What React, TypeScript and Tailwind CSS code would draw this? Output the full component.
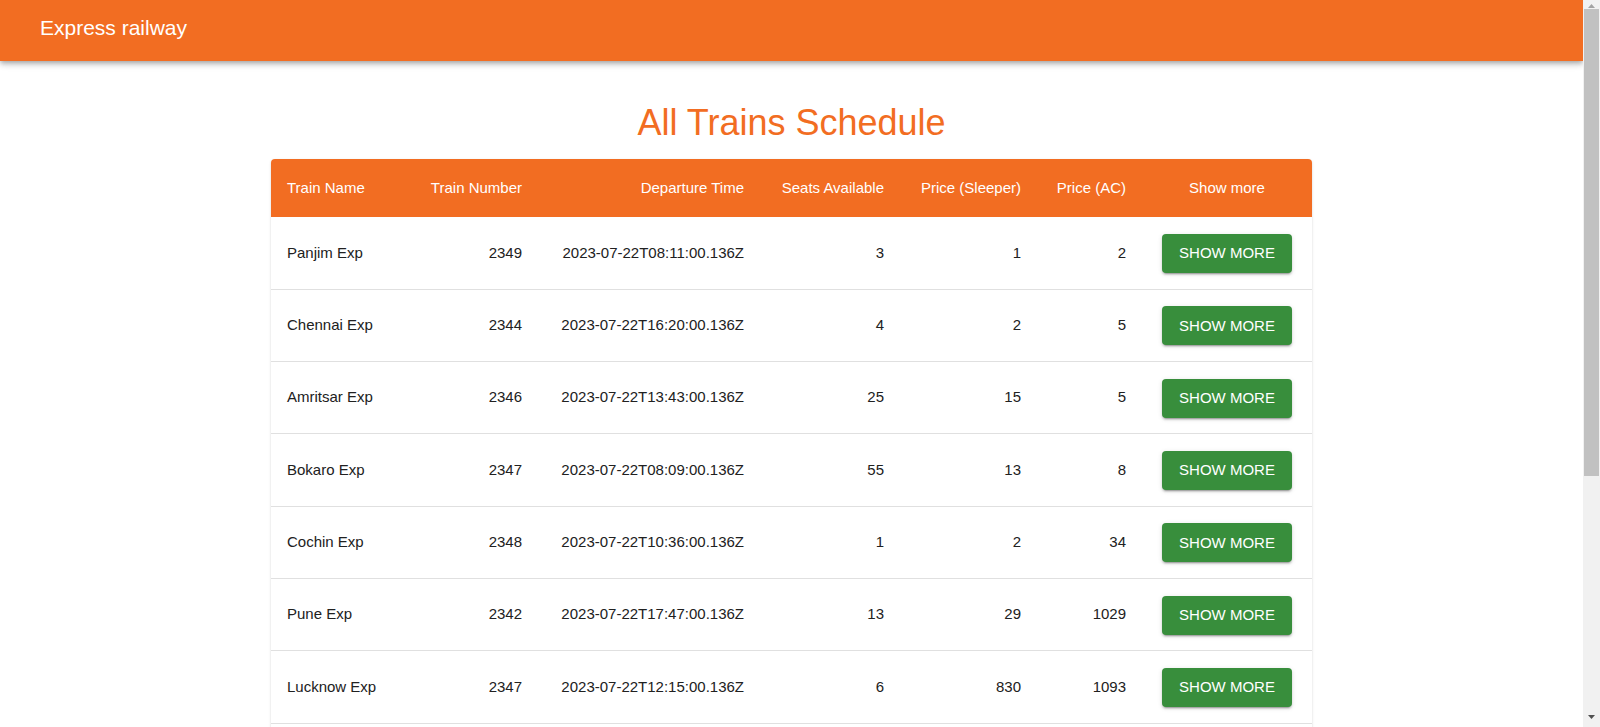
import React from 'react';

type Train = {
  name: string;
  number: number;
  departure: string;
  seats: number;
  sleeper: number;
  ac: number;
};

const trains: Train[] = [
  { name: 'Panjim Exp', number: 2349, departure: '2023-07-22T08:11:00.136Z', seats: 3, sleeper: 1, ac: 2 },
  { name: 'Chennai Exp', number: 2344, departure: '2023-07-22T16:20:00.136Z', seats: 4, sleeper: 2, ac: 5 },
  { name: 'Amritsar Exp', number: 2346, departure: '2023-07-22T13:43:00.136Z', seats: 25, sleeper: 15, ac: 5 },
  { name: 'Bokaro Exp', number: 2347, departure: '2023-07-22T08:09:00.136Z', seats: 55, sleeper: 13, ac: 8 },
  { name: 'Cochin Exp', number: 2348, departure: '2023-07-22T10:36:00.136Z', seats: 1, sleeper: 2, ac: 34 },
  { name: 'Pune Exp', number: 2342, departure: '2023-07-22T17:47:00.136Z', seats: 13, sleeper: 29, ac: 1029 },
  { name: 'Lucknow Exp', number: 2347, departure: '2023-07-22T12:15:00.136Z', seats: 6, sleeper: 830, ac: 1093 },
];

// fake windows-style scrollbar, headless chrome hides the real one
function Scrollbar() {
  return (
    <div className="flex w-[17px] shrink-0 flex-col bg-[#f1f1f1]">
      <div className="flex h-[8px] items-end justify-center">
        <svg width="7" height="4" viewBox="0 0 7 4">
          <polygon points="3.5,0 7,4 0,4" fill="#a3a3a3" />
        </svg>
      </div>
      <div className="mx-[1px] mt-[1px] h-[467px] bg-[#c1c1c1]" />
      <div className="flex-1" />
      <div className="flex h-[12px] items-start justify-center">
        <svg width="7" height="4" viewBox="0 0 7 4">
          <polygon points="0,0 7,0 3.5,4" fill="#505050" />
        </svg>
      </div>
    </div>
  );
}

export default function App() {
  return (
    <div className="flex h-screen overflow-hidden bg-white font-['Liberation_Sans',Arial,sans-serif]">
      <div className="min-w-0 flex-1 overflow-hidden">
        <header className="relative z-10 h-[61px] bg-[#f26d22] pl-10 pt-[14px] shadow-[0_2px_4px_-1px_rgba(0,0,0,0.2),0_4px_5px_0_rgba(0,0,0,0.14),0_1px_10px_0_rgba(0,0,0,0.12)]">
          <h1 className="text-[21px] leading-[28px] text-white">Express railway</h1>
        </header>

        <main className="flex flex-col items-center pt-[42px]">
          <h2 className="text-4xl text-[#f26d22]">All Trains Schedule</h2>

          <div className="mt-4 w-[1041px] overflow-hidden rounded-t bg-white shadow-[0_2px_1px_-1px_rgba(0,0,0,0.2),0_1px_1px_0_rgba(0,0,0,0.14),0_1px_3px_0_rgba(0,0,0,0.12)]">
            <table className="w-full table-fixed whitespace-nowrap text-[15px]">
              <colgroup>
                <col className="w-[143px]" />
                <col className="w-[124px]" />
                <col className="w-[222px]" />
                <col className="w-[140px]" />
                <col className="w-[137px]" />
                <col className="w-[105px]" />
                <col className="w-[170px]" />
              </colgroup>
              <thead className="bg-[#f26d22] text-white">
                <tr className="h-[58px]">
                  <th className="px-4 text-left font-normal">Train Name</th>
                  <th className="px-4 text-right font-normal">Train Number</th>
                  <th className="px-4 text-right font-normal">Departure Time</th>
                  <th className="px-4 text-right font-normal">Seats Available</th>
                  <th className="px-4 text-right font-normal">Price (Sleeper)</th>
                  <th className="px-4 text-right font-normal">Price (AC)</th>
                  <th className="px-4 text-center font-normal">Show more</th>
                </tr>
              </thead>
              <tbody className="text-[#212121]">
                {trains.map((t, i) => (
                  <tr key={i} className="h-[72.3px] border-b border-[#e0e0e0]">
                    <td className="px-4 text-left">{t.name}</td>
                    <td className="px-4 text-right">{t.number}</td>
                    <td className="px-4 text-right">{t.departure}</td>
                    <td className="px-4 text-right">{t.seats}</td>
                    <td className="px-4 text-right">{t.sleeper}</td>
                    <td className="px-4 text-right">{t.ac}</td>
                    <td className="px-4 pt-px text-center">
                      <button className="inline-flex h-[39px] w-[130px] items-center justify-center rounded bg-[#388e3c] text-[15px] uppercase text-white shadow-[0_3px_1px_-2px_rgba(0,0,0,0.2),0_2px_2px_0_rgba(0,0,0,0.14),0_1px_5px_0_rgba(0,0,0,0.12)]">
                        Show more
                      </button>
                    </td>
                  </tr>
                ))}
              </tbody>
            </table>
            <div className="h-10" />
          </div>
        </main>
      </div>
      <Scrollbar />
    </div>
  );
}
